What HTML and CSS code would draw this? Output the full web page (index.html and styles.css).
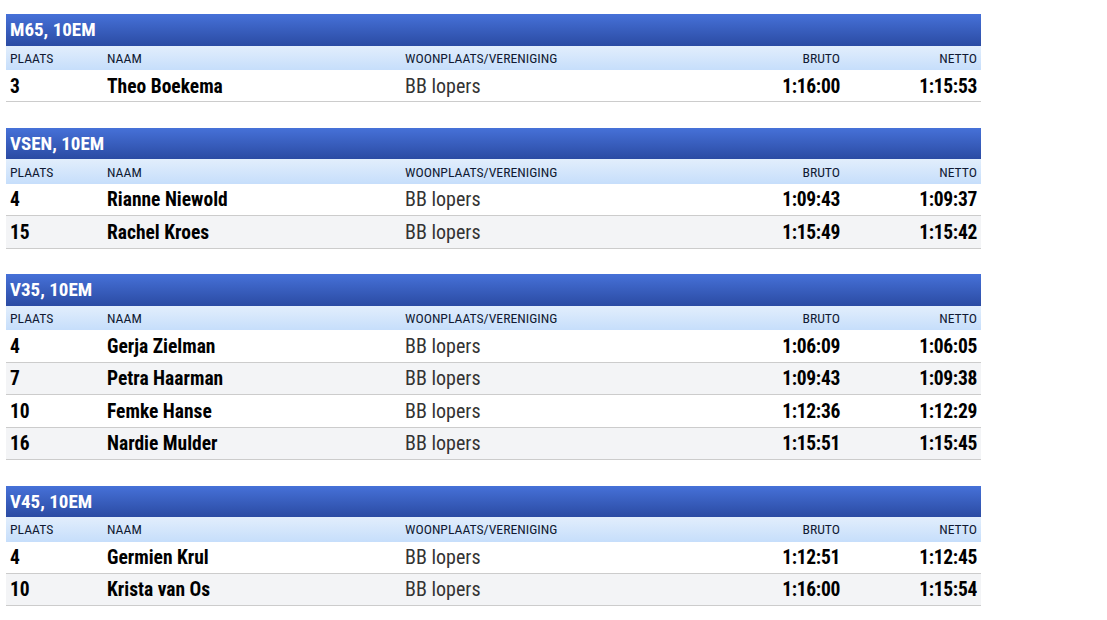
FILE: index.html
```html
<!DOCTYPE html>
<html>
<head>
<meta charset="utf-8">
<link rel="stylesheet" href="styles.css">
</head>
<body>
<div class="results">
  <section class="cat">
    <h2 class="cat-title">M65, 10EM</h2>
    <div class="row head"><span>PLAATS</span><span>NAAM</span><span>WOONPLAATS/VERENIGING</span><span class="r">BRUTO</span><span class="r">NETTO</span></div>
    <div class="row"><span>3</span><span>Theo Boekema</span><span class="club">BB lopers</span><span class="r t">1:16:00</span><span class="r t">1:15:53</span></div>
  </section>
  <section class="cat">
    <h2 class="cat-title">VSEN, 10EM</h2>
    <div class="row head"><span>PLAATS</span><span>NAAM</span><span>WOONPLAATS/VERENIGING</span><span class="r">BRUTO</span><span class="r">NETTO</span></div>
    <div class="row"><span>4</span><span>Rianne Niewold</span><span class="club">BB lopers</span><span class="r t">1:09:43</span><span class="r t">1:09:37</span></div>
    <div class="row alt"><span>15</span><span>Rachel Kroes</span><span class="club">BB lopers</span><span class="r t">1:15:49</span><span class="r t">1:15:42</span></div>
  </section>
  <section class="cat">
    <h2 class="cat-title">V35, 10EM</h2>
    <div class="row head"><span>PLAATS</span><span>NAAM</span><span>WOONPLAATS/VERENIGING</span><span class="r">BRUTO</span><span class="r">NETTO</span></div>
    <div class="row"><span>4</span><span>Gerja Zielman</span><span class="club">BB lopers</span><span class="r t">1:06:09</span><span class="r t">1:06:05</span></div>
    <div class="row alt"><span>7</span><span>Petra Haarman</span><span class="club">BB lopers</span><span class="r t">1:09:43</span><span class="r t">1:09:38</span></div>
    <div class="row"><span>10</span><span>Femke Hanse</span><span class="club">BB lopers</span><span class="r t">1:12:36</span><span class="r t">1:12:29</span></div>
    <div class="row alt"><span>16</span><span>Nardie Mulder</span><span class="club">BB lopers</span><span class="r t">1:15:51</span><span class="r t">1:15:45</span></div>
  </section>
  <section class="cat">
    <h2 class="cat-title">V45, 10EM</h2>
    <div class="row head"><span>PLAATS</span><span>NAAM</span><span>WOONPLAATS/VERENIGING</span><span class="r">BRUTO</span><span class="r">NETTO</span></div>
    <div class="row"><span>4</span><span>Germien Krul</span><span class="club">BB lopers</span><span class="r t">1:12:51</span><span class="r t">1:12:45</span></div>
    <div class="row alt"><span>10</span><span>Krista van Os</span><span class="club">BB lopers</span><span class="r t">1:16:00</span><span class="r t">1:15:54</span></div>
  </section>
</div>
</body>
</html>
```
FILE: styles.css
```css
html, body {
  margin: 0;
  padding: 0;
  background: #fff;
}
body {
  font-family: "Roboto Condensed", Roboto, "Liberation Sans Narrow", sans-serif;
  font-stretch: condensed;
  color: #000;
}
.results {
  width: 975px;
  padding: 14px 0 0 6px;
  display: flex;
  flex-direction: column;
  gap: 25.6px;
}
.cat-title {
  margin: 0;
  height: 31.5px;
  line-height: 31.5px;
  padding: 0 4px;
  font-size: 19px;
  font-weight: 700;
  color: #fff;
  background: linear-gradient(#4671d8, #2b4ba3);
}
.row {
  display: grid;
  grid-template-columns: 97px 298px 1fr 120px 137px;
  align-content: center;
  align-items: baseline;
  height: 32.4px;
  padding: 0 4px;
  border-bottom: 1px solid #ccc;
  font-size: 19.5px;
  line-height: 1.2;
  font-weight: 700;
  box-sizing: border-box;
}
.row.alt {
  background: #f3f4f6;
}
.row.head {
  height: 24.5px;
  border-bottom: none;
  font-size: 13.7px;
  font-weight: 400;
  color: #111a33;
  background: linear-gradient(#e2eefc, #c6defb);
}
.club {
  font-weight: 400;
  font-size: 20px;
  color: #333;
}
.row.head .club {
  color: inherit;
  font-size: inherit;
}
.r {
  text-align: right;
}
.t {
  letter-spacing: -0.3px;
}
```
